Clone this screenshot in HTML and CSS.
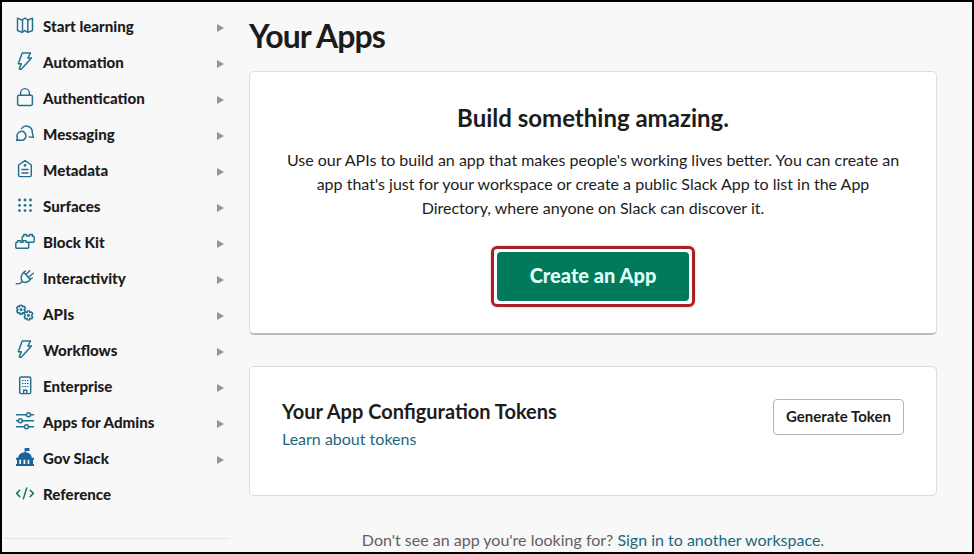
FILE: index.html
```html
<!DOCTYPE html>
<html lang="en">
<head>
<meta charset="utf-8">
<title>Your Apps</title>
<link rel="stylesheet" href="styles.css">
</head>
<body>
<svg class="defs" aria-hidden="true">
  <symbol id="bolt" viewBox="0 0 20 20"><path d="M7.200 2H15.600L12.800 7H16.500L6 18.500 4.200 17.900 6.300 12.800H3.300z"/></symbol>
  <symbol id="gear" viewBox="0 0 10 10"><path d="M4 .6h2l.4 1.700 1.700-.5 1 1.800L7.900 5l1.200 1.400-1 1.800-1.700-.5L6 9.400H4l-.4-1.700-1.700.5-1-1.800L2.100 5 .9 3.600l1-1.800 1.700.5z"/><circle cx="5" cy="5" r=".7"/></symbol>
</svg>
<div class="page">
  <nav class="sidebar">
    <ul class="menu">
      <li class="item"><svg class="icon" viewBox="0 0 20 20"><path d="M2.500 3.200 7 5l3-1.900L13.200 5l4.300-1.800v12.300L13 17.300l-3.200-1.700L7 17.300l-4.500-1.800zM7.500 5v12.300M12.800 5v12.300"/></svg><span>Start learning</span><i class="arrow"></i></li>
      <li class="item"><svg class="icon"><use href="#bolt"/></svg><span>Automation</span><i class="arrow"></i></li>
      <li class="item"><svg class="icon" viewBox="0 0 20 20"><rect x="2.600" y="8.300" width="14.800" height="10.100" rx="1.400"/><path d="M5.600 8.300V6a4.200 4.200 0 0 1 8.800 0v2.300"/></svg><span>Authentication</span><i class="arrow"></i></li>
      <li class="item"><svg class="icon" viewBox="0 0 20 20"><path d="M1.600 17.500 2.400 14.800A4.500 4.500 0 1 1 4.700 17zM6.500 5.600A6 6 0 0 1 17.300 9.500L18.400 14.400 14 13.900"/></svg><span>Messaging</span><i class="arrow"></i></li>
      <li class="item"><svg class="icon" viewBox="0 0 20 20"><path d="M10 1.700 16.300 6v10.200q0 1.400-1.400 1.400H5q-1.400 0-1.400-1.400V6zM7 10.400h6M7 13.900h6"/><circle cx="10" cy="6.300" r=".7"/></svg><span>Metadata</span><i class="arrow"></i></li>
      <li class="item"><svg class="icon solid" viewBox="0 0 20 20"><circle cx="4.500" cy="5" r="1.400"/><circle cx="10" cy="5" r="1.400"/><circle cx="15.500" cy="5" r="1.400"/><circle cx="4.500" cy="10.300" r="1.400"/><circle cx="10" cy="10.300" r="1.400"/><circle cx="15.500" cy="10.300" r="1.400"/><circle cx="4.500" cy="15.600" r="1.400"/><circle cx="10" cy="15.600" r="1.400"/><circle cx="15.500" cy="15.600" r="1.400"/></svg><span>Surfaces</span><i class="arrow"></i></li>
      <li class="item"><svg class="icon" viewBox="0 0 20 20"><path d="M7.200 9.500V6.300q0-1 1-1h.6V3.500h2.800v1.500h3V3.500h2.800v1.800h.8q1 0 1 1v3.900q0 1-1 1h-4.500M.8 12.200q0-1 1-1h.8V9.700h3v1.500h2.400V9.700h3v1.500h1.700q1 0 1 1v4.100q0 1-1 1H1.800q-1 0-1-1z"/></svg><span>Block Kit</span><i class="arrow"></i></li>
      <li class="item"><svg class="icon" viewBox="0 0 20 20"><path d="M1.300 16.800c2.800.3 4.500-.5 6.100-2.100M8.700 5.300l6.500 7.200c-2.200 3-5.700 3.800-7.800 1.800S5.800 8 8.700 5.300zM11 7.500 14.800 3.800M13.600 10.200 18.300 6.300M8.700 5.300 10.500 4M15.200 12.500 17.200 11"/></svg><span>Interactivity</span><i class="arrow"></i></li>
      <li class="item"><svg class="icon" viewBox="0 0 20 20"><use href="#gear" x=".8" y="1.400" width="10.500" height="10.500"/><use href="#gear" x="8.200" y="7.200" width="10.500" height="10.500"/></svg><span>APIs</span><i class="arrow"></i></li>
      <li class="item"><svg class="icon"><use href="#bolt"/></svg><span>Workflows</span><i class="arrow"></i></li>
      <li class="item"><svg class="icon" viewBox="0 0 20 20"><rect x="4.700" y="1.900" width="11" height="16.700" rx="1.400"/><path d="M8.600 18.500v-3.200h3.200v3.200"/><path class="dots" d="M7 5.500h1.500m1 0H11m1 0h1.500M7 8.500h1.500m1 0H11m1 0h1.500M7 11.500h1.500m1 0H11m1 0h1.500"/></svg><span>Enterprise</span><i class="arrow"></i></li>
      <li class="item"><svg class="icon" viewBox="0 0 20 20"><path d="M1.500 3.800h9.800m4.400 0h2.800M1.500 9.800H3m4.400 0h11.100M1.500 15.800h7.800m4.400 0h4.800"/><circle cx="13.500" cy="3.800" r="2"/><circle cx="5.300" cy="9.800" r="2"/><circle cx="11.500" cy="15.800" r="2"/></svg><span>Apps for Admins</span><i class="arrow"></i></li>
      <li class="item"><svg class="icon gov" viewBox="0 0 20 20"><path d="M9.600 1h4.900v3h-3.700v1.300c3.500.3 5.700 2.400 6 5.400H19v2h-1v4.400h1V19H1v-1.900h1v-4.400H1v-2h2.200c.3-3 2.700-5.100 6.400-5.400zM4.300 12.700v4.400h1.800v-4.400zm4.200 0v4.400h1.800v-4.400zm4.200 0v4.400h1.600v-4.400z"/></svg><span>Gov Slack</span><i class="arrow"></i></li>
      <li class="item"><svg class="icon ref" viewBox="0 0 20 20"><path d="m4.800 7.200-3.200 3.200 3.200 3.200M15.200 7.200l3.200 3.200-3.200 3.200M11.700 5 8.400 15.800"/></svg><span>Reference</span></li>
    </ul>
  </nav>
  <main class="content">
    <h1>Your Apps</h1>
    <section class="card build">
      <h2>Build something amazing.</h2>
      <p>Use our APIs to build an app that makes people's working lives better. You can create an<br>app that's just for your workspace or create a public Slack App to list in the App<br>Directory, where anyone on Slack can discover it.</p>
      <div class="highlight"><button class="create">Create an App</button></div>
    </section>
    <section class="card tokens">
      <div>
        <h3>Your App Configuration Tokens</h3>
        <a href="#">Learn about tokens</a>
      </div>
      <button class="generate">Generate Token</button>
    </section>
    <p class="other">Don't see an app you're looking for? <a href="#">Sign in to another workspace.</a></p>
  </main>
</div>
</body>
</html>
```
FILE: styles.css
```css
* { box-sizing: border-box; }
body { margin: 0; font-family: Lato, sans-serif; color: #1d1c1d; }
h1, h2, h3, p, ul { margin: 0; padding: 0; }
a { color: #1c6780; text-decoration: none; }
button { font-family: inherit; padding: 0; }
.defs { display: none; }
.page { display: flex; height: 554px; border: 2px solid #000; background: #f8f8f8; overflow: hidden; }
.sidebar { width: 226px; flex: none; margin-left: 2px; padding-top: 6px; }
.menu { list-style: none; height: 531px; border-bottom: 1px solid #e4e4e4; }
.item { display: flex; align-items: center; height: 36px; padding: 0 6px 0 11px; font-size: 15.1px; font-weight: 900; line-height: 22px; white-space: nowrap; }
.item span { margin-left: 8px; }
.icon { width: 20px; height: 20px; flex: none; margin-top: -2px; fill: none; stroke: #236f8d; stroke-width: 1.45; stroke-linejoin: round; stroke-linecap: round; }
.solid { fill: #236f8d; stroke: none; }
.gov { fill: #17649b; stroke: none; }
.ref { stroke: #167b58; stroke-width: 1.5; }
.dots { stroke-width: 1.2; stroke-linecap: butt; }
.arrow { margin: 3px 0 0 auto; border-left: 7px solid #959595; border-top: 4px solid transparent; border-bottom: 4px solid transparent; }
.content { width: 688px; margin-left: 19px; flex: none; }
h1 { height: 69px; padding-top: 14px; font-size: 32px; line-height: 40px; font-weight: 700; letter-spacing: -0.9px; }
.card { background: #fff; border: 1px solid #ddd; border-radius: 5px; }
.build { height: 264px; border-bottom: 2px solid #bbb; text-align: center; padding-top: 30px; }
h2 { font-size: 24px; line-height: 32px; font-weight: 700; }
.build p { margin-top: 14px; font-size: 16px; line-height: 24px; white-space: nowrap; }
.highlight { width: 204px; height: 61px; margin: 26px auto 0; padding: 3px; border: 3px solid #ab2024; border-radius: 6px; box-shadow: 0 0 2px #e99; }
.create { display: block; width: 192px; height: 49px; padding-bottom: 3px; border: 0; border-radius: 4px; background: #007a5a; color: #dffff7; font-size: 20px; font-weight: 900; }
.tokens { height: 130px; margin-top: 31px; padding: 32px; display: flex; justify-content: space-between; align-items: flex-start; }
h3 { font-size: 20px; line-height: 24px; font-weight: 700; }
.tokens a { display: block; margin-top: 4px; font-size: 16px; line-height: 24px; }
.generate { width: 131px; height: 36px; padding-bottom: 2px; background: #fff; border: 1px solid #b5b5b5; border-radius: 4px; color: #1d1c1d; font-size: 15px; font-weight: 700; }
.other { margin-top: 32px; text-align: center; font-size: 16px; line-height: 24px; color: #616061; }
```
